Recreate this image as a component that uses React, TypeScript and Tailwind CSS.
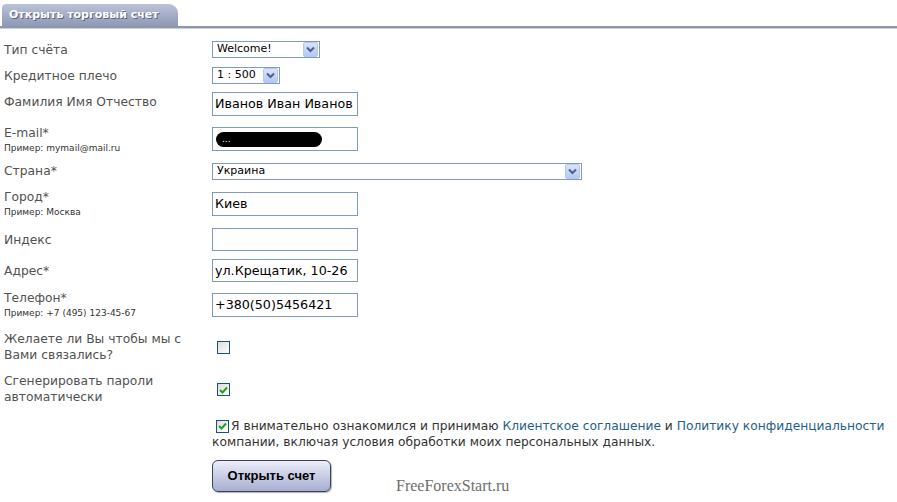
import React from "react";

const Arrow = () => (
  <div className="w-[15px] h-[15px] flex items-center justify-center rounded-[2px] border border-[#b6c8f0] bg-gradient-to-b from-[#d9e4fd] to-[#b3c8f5]">
    <svg width="9" height="7" viewBox="0 0 9 7">
      <path d="M1 1.5 L4.5 5 L8 1.5" fill="none" stroke="#4d6185" strokeWidth="2" />
    </svg>
  </div>
);

const Select = ({ value, width }: { value: string; width: string }) => (
  <div className={`${width} h-[17px] flex items-center justify-between border border-[#7f9db9] bg-white pl-[4px] pr-[1px] text-[11px] text-black`}>
    <span>{value}</span>
    <Arrow />
  </div>
);

const Input = ({ value, h = "h-[24px]" }: { value?: string; h?: string }) => (
  <div className={`w-[146px] ${h} flex items-center border border-[#7f9db9] bg-white pl-[2px] text-[12.7px] text-black whitespace-nowrap overflow-hidden`}>
    {value}
  </div>
);

const Checkbox = ({ checked }: { checked?: boolean }) => (
  <div className="w-[13px] h-[13px] shrink-0 flex items-center justify-center border border-[#1c5180] bg-gradient-to-br from-[#dcdcd7] to-white">
    {checked && (
      <svg width="9" height="8" viewBox="0 0 9 8">
        <path d="M1 4 L3.5 6.5 L8 1.5" fill="none" stroke="#21a121" strokeWidth="2" />
      </svg>
    )}
  </div>
);

const Label = ({ text, sub, pt }: { text: React.ReactNode; sub?: string; pt: string }) => (
  <div className={`w-[212px] shrink-0 pl-[4px] ${pt}`}>
    <div className="text-[12.3px] leading-4 text-[#525252]">{text}</div>
    {sub && <div className="text-[9px] leading-3 mt-[1px] text-[#333]">{sub}</div>}
  </div>
);

export default function App() {
  return (
    <div className="w-[897px] h-[502px] overflow-hidden bg-white font-['DejaVu_Sans',sans-serif]">
      {/* tab header */}
      <div className="h-[26px] flex items-end pl-[2px]">
        <div className="w-[176px] h-[22px] rounded-tl-[4px] rounded-tr-[9px] bg-gradient-to-b from-[#bcc3d9] to-[#8f98b5] pl-[7px] flex items-center">
          <span className="text-[11px] font-bold text-white [text-shadow:1px_1px_0_#5b6380]">Открыть торговый счет</span>
        </div>
      </div>
      <div className="h-[2px] bg-[#8c97a8]" />
      <div className="h-[1px] bg-[#c9d0da]" />

      <div className="flex h-[34px]">
        <Label text="Тип счёта" pt="pt-[13px]" />
        <div className="pt-[12px]">
          <Select value="Welcome!" width="w-[108px]" />
        </div>
      </div>
      <div className="flex h-[26px]">
        <Label text="Кредитное плечо" pt="pt-[5px]" />
        <div className="pt-[4px]">
          <Select value="1 : 500" width="w-[68px]" />
        </div>
      </div>
      <div className="flex h-[33px]">
        <Label text="Фамилия Имя Отчество" pt="pt-[5px]" />
        <div className="pt-[3px]">
          <Input value="Иванов Иван Иванов" />
        </div>
      </div>
      <div className="flex h-[36px]">
        <Label text="E-mail*" sub="Пример: mymail@mail.ru" pt="pt-[3px]" />
        <div className="pt-[5px]">
          <div className="w-[146px] h-[24px] flex items-center border border-[#7f9db9] bg-white pl-[3px]">
            <div className="w-[106px] h-[15px] rounded-full bg-black flex items-center pl-[6px] text-[9px] leading-none text-white">...</div>
          </div>
        </div>
      </div>
      <div className="flex h-[27px]">
        <Label text="Страна*" pt="pt-[5px]" />
        <div className="pt-[5px]">
          <Select value="Украина" width="w-[370px]" />
        </div>
      </div>
      <div className="flex h-[37px]">
        <Label text="Город*" sub="Пример: Москва" pt="pt-[4px]" />
        <div className="pt-[7px]">
          <Input value="Киев" />
        </div>
      </div>
      <div className="flex h-[32px]">
        <Label text="Индекс" pt="pt-[10px]" />
        <div className="pt-[6px]">
          <Input h="h-[23px]" />
        </div>
      </div>
      <div className="flex h-[33px]">
        <Label text="Адрес*" pt="pt-[9px]" />
        <div className="pt-[5px]">
          <Input value="ул.Крещатик, 10-26" h="h-[23px]" />
        </div>
      </div>
      <div className="flex h-[36px]">
        <Label text="Телефон*" sub="Пример: +7 (495) 123-45-67" pt="pt-[3px]" />
        <div className="pt-[6px]">
          <Input value="+380(50)5456421" />
        </div>
      </div>
      <div className="flex h-[44px]">
        <Label text={<>Желаете ли Вы чтобы мы с<br />Вами связались?</>} pt="pt-[8px]" />
        <div className="pt-[18px] pl-[5px]">
          <Checkbox />
        </div>
      </div>
      <div className="flex h-[43px]">
        <Label text={<>Сгенерировать пароли<br />автоматически</>} pt="pt-[6px]" />
        <div className="pt-[16px] pl-[5px]">
          <Checkbox checked />
        </div>
      </div>

      <div className="pl-[212px] pt-[8px] text-[12.25px] leading-4 text-[#333]">
        <div className="flex items-center pl-[4px] whitespace-nowrap">
          <Checkbox checked />
          <span className="ml-[2px]">
            Я внимательно ознакомился и принимаю{" "}
            <span className="text-[#1f5f8b]">Клиентское соглашение</span> и{" "}
            <span className="text-[#1f5f8b]">Политику конфиденциальности</span>
          </span>
        </div>
        <div>компании, включая условия обработки моих персональных данных.</div>
      </div>

      <div className="flex items-end pl-[212px] pt-[10px]">
        <div className="w-[119px] h-[32px] rounded-[6px] border border-[#3d4257] bg-gradient-to-b from-[#eceef9] to-[#a7aed0] flex items-center justify-center shadow-[1px_1px_1px_rgba(0,0,0,0.3)]">
          <span className="font-['Liberation_Sans',sans-serif] text-[13px] font-bold text-black">Открыть счет</span>
        </div>
        <span className="ml-[65px] mb-[-6px] font-['Liberation_Serif',serif] text-[16px] text-[#6e6e6e]">FreeForexStart.ru</span>
      </div>
    </div>
  );
}
